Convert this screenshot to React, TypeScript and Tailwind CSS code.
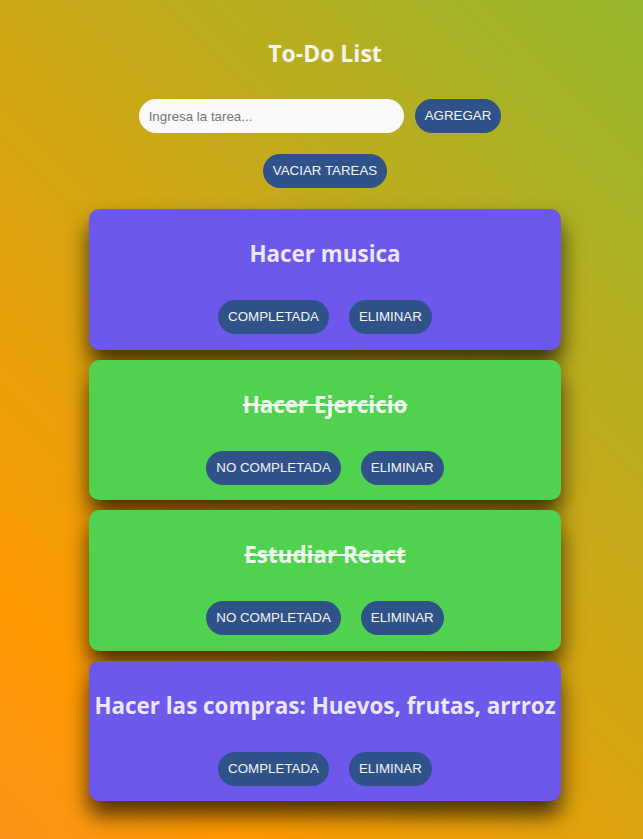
import React from "react";

interface Task {
  text: string;
  done: boolean;
}

const tasks: Task[] = [
  { text: "Hacer musica", done: false },
  { text: "Hacer Ejercicio", done: true },
  { text: "Estudiar React", done: true },
  { text: "Hacer las compras: Huevos, frutas, arrroz", done: false },
];

const btn =
  "h-[34px] px-[10px] rounded-full bg-[#2f5289] text-[#f4f4f4] text-[13.33px] font-['Liberation_Sans',Arial,sans-serif] leading-none";

const TaskCard: React.FC<{ task: Task }> = ({ task }) => (
  <div
    className={`w-[472px] h-[140.5px] rounded-[10px] flex flex-col items-center pt-[29px] shadow-[0_14px_22px_rgba(0,0,0,0.7)] ${
      task.done ? "bg-[#50d150]" : "bg-[#6c58eb]"
    }`}
  >
    <h2
      className={`text-[22.4px] leading-[32px] font-bold whitespace-nowrap font-['Open_Sans',sans-serif] ${
        task.done ? "line-through text-[#eefcee]" : "text-[#ebe7ff]"
      }`}
    >
      {task.text}
    </h2>
    <div className="flex gap-5 mt-[30px]">
      <button className={btn}>{task.done ? "NO COMPLETADA" : "COMPLETADA"}</button>
      <button className={btn}>ELIMINAR</button>
    </div>
  </div>
);

export default function App() {
  return (
    <div className="min-h-[839px] w-full bg-[linear-gradient(45deg,#f8951a_0%,#ff9a00_16%,#96b72e_100%)] pl-[7px] flex flex-col items-center">
      <h1 className="mt-[36px] text-[23px] leading-[34px] font-bold text-[#f5f5ec] font-['Open_Sans',sans-serif]">
        To-Do List
      </h1>
      <div className="flex items-center gap-[11px] mt-[29px] pr-[10px]">
        <input
          placeholder="Ingresa la tarea..."
          className="w-[265px] h-[34px] rounded-full bg-[#fafafa] px-[10px] text-[13.33px] font-['Liberation_Sans',Arial,sans-serif] placeholder:text-[#767676] outline-none"
        />
        <button className={btn}>AGREGAR</button>
      </div>
      <button className={`${btn} mt-[21px]`}>VACIAR TAREAS</button>
      <div className="flex flex-col gap-[10px] mt-[21px]">
        {tasks.map((t) => (
          <TaskCard key={t.text} task={t} />
        ))}
      </div>
    </div>
  );
}
